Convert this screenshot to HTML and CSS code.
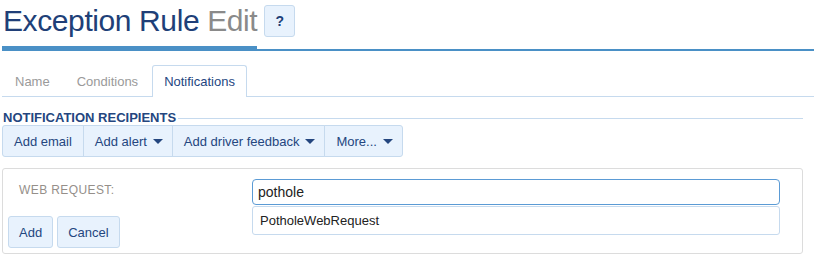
FILE: index.html
```html
<!DOCTYPE html>
<html lang="en">

<head>
    <meta charset="UTF-8">
    <title>Exception Rule Edit</title>
    <link rel="stylesheet" href="styles.css">
</head>

<body>

    <!-- Page title -->
    <div class="page-header">
        <h1 class="title">Exception Rule <span class="title-mode">Edit</span></h1>
        <button class="help-btn" aria-label="Help">?</button>
    </div>

    <!-- Tabs -->
    <div class="tabs">
        <div class="tab">Name</div>
        <div class="tab">Conditions</div>
        <div class="tab active">Notifications</div>
    </div>

    <div class="content">
        <div class="section-title">
            <span>NOTIFICATION RECIPIENTS</span>
            <div class="section-line"></div>
        </div>

        <div class="btn-group">
            <button class="btn">Add email</button>
            <button class="btn dropdown">Add alert <span class="caret"></span></button>
            <button class="btn dropdown">Add driver feedback <span class="caret"></span></button>
            <button class="btn dropdown">More... <span class="caret"></span></button>
        </div>

        <!-- Web request form -->
        <div class="panel">
            <div class="panel-left">
                <div class="field-label">WEB REQUEST:</div>
                <div class="form-actions">
                    <button class="btn small">Add</button>
                    <button class="btn small">Cancel</button>
                </div>
            </div>
            <div class="panel-right">
                <input type="text" class="search-input" value="pothole">
                <div class="suggestions">
                    <div class="suggestion">PotholeWebRequest</div>
                </div>
            </div>
        </div>
    </div>

</body>

</html>
```

FILE: styles.css
```css
body {
    font-family: 'Liberation Sans', Arial, sans-serif;
    background-color: #fff;
    margin: 0;
    color: #222;
}

.page-header {
    display: flex;
    align-items: flex-start;
    margin-left: 2px;
    border-bottom: 2px solid #4a90c6;
}

.title {
    margin: 0 0 -2px 0;
    padding: 4px 0 8px 1px;
    font-size: 30px;
    line-height: 34px;
    font-weight: normal;
    letter-spacing: -0.4px;
    color: #203f78;
    border-bottom: 5px solid #4a90c6;
}

.title-mode {
    color: #8a8a8a;
}

.help-btn {
    margin: 5px 0 0 7px;
    width: 31px;
    height: 32px;
    padding: 0;
    background-color: #e8f2fd;
    border: 1px solid #c6daee;
    border-radius: 3px;
    color: #203f78;
    font-family: 'Liberation Sans', Arial, sans-serif;
    font-weight: bold;
    font-size: 14px;
}

.tabs {
    display: flex;
    margin: 14px 0 0 2px;
    border-bottom: 1px solid #c6daee;
}

.tab {
    padding: 0 12px;
    line-height: 31px;
    font-size: 13px;
    color: #9a9a9a;
    border: 1px solid transparent;
    border-bottom: none;
    margin-bottom: -1px;
    margin-right: 1px;
    border-radius: 3px 3px 0 0;
}

.tab.active {
    color: #24467f;
    background-color: #fff;
    border-color: #c6daee;
    padding: 0 11px;
}

.content {
    padding: 0 11px 0 2px;
}

.section-title {
    display: flex;
    align-items: center;
    margin-top: 13px;
    line-height: 16px;
    font-size: 13px;
    font-weight: bold;
    color: #24467f;
    padding-left: 1px;
}

.section-line {
    flex: 1;
    border-top: 1px solid #c6daee;
    margin-left: 2px;
}

.btn-group {
    display: flex;
    margin-top: -1px;
}

.btn {
    display: flex;
    align-items: center;
    height: 32px;
    padding: 0 11px;
    background-color: #e8f2fd;
    border: 1px solid #c6daee;
    color: #24467f;
    font-family: 'Liberation Sans', Arial, sans-serif;
    font-size: 13px;
    cursor: pointer;
}

.btn.dropdown {
    padding-right: 9px;
}

.btn-group .btn {
    border-radius: 0;
    margin-right: -1px;
}

.btn-group .btn:first-child {
    border-radius: 3px 0 0 3px;
}

.btn-group .btn:last-child {
    border-radius: 0 3px 3px 0;
}

.caret {
    display: inline-block;
    width: 0;
    height: 0;
    margin-left: 6px;
    border-left: 5px solid transparent;
    border-right: 5px solid transparent;
    border-top: 5px solid #24467f;
}

.panel {
    display: flex;
    margin-top: 11px;
    padding: 10px 22px 5px 5px;
    border: 1px solid #dcdcdc;
    border-radius: 3px;
}

.panel-left {
    width: 244px;
}

.field-label {
    padding-left: 11px;
    line-height: 22px;
    font-size: 12px;
    letter-spacing: 0.4px;
    color: #958f8a;
}

.form-actions {
    display: flex;
    gap: 4px;
    margin-top: 15px;
}

.btn.small {
    border-radius: 3px;
    padding: 0 10px;
}

.panel-right {
    flex: 1;
}

.search-input {
    display: block;
    width: 100%;
    height: 26px;
    box-sizing: border-box;
    padding: 0 5px;
    font-family: 'Liberation Sans', Arial, sans-serif;
    font-size: 14px;
    color: #222;
    border: 1px solid #5b9bd5;
    border-radius: 4px;
    outline: none;
}

.suggestions {
    margin-top: 1px;
    border: 1px solid #c6daee;
    border-radius: 3px;
}

.suggestion {
    padding: 0 7px;
    line-height: 27px;
    font-size: 13px;
    color: #222;
}
```
